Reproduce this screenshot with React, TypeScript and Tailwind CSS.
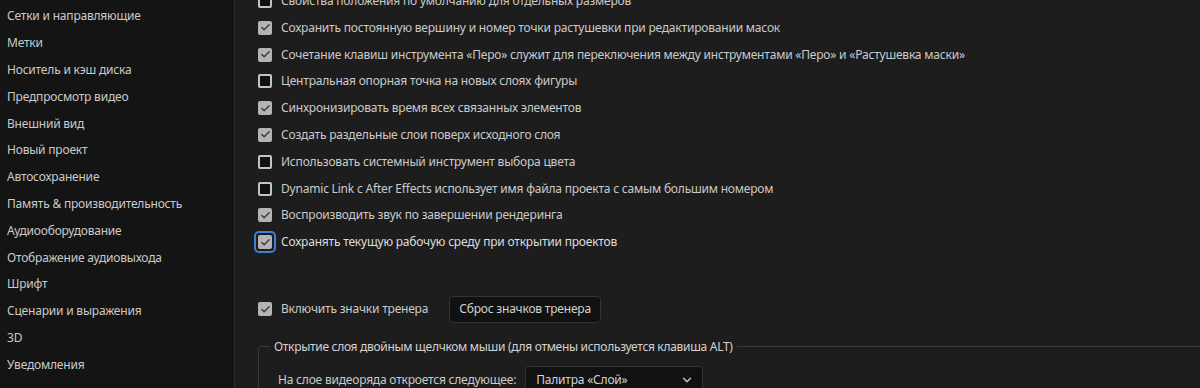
import { Check, ChevronDown } from "lucide-react";

const sidebarItems = [
  "Сетки и направляющие",
  "Метки",
  "Носитель и кэш диска",
  "Предпросмотр видео",
  "Внешний вид",
  "Новый проект",
  "Автосохранение",
  "Память & производительность",
  "Аудиооборудование",
  "Отображение аудиовыхода",
  "Шрифт",
  "Сценарии и выражения",
  "3D",
  "Уведомления",
];

const options: { label: string; checked: boolean; focused?: boolean }[] = [
  { label: "Свойства положения по умолчанию для отдельных размеров", checked: false },
  { label: "Сохранить постоянную вершину и номер точки растушевки при редактировании масок", checked: true },
  {
    label: "Сочетание клавиш инструмента «Перо» служит для переключения между инструментами «Перо» и «Растушевка маски»",
    checked: true,
  },
  { label: "Центральная опорная точка на новых слоях фигуры", checked: false },
  { label: "Синхронизировать время всех связанных элементов", checked: true },
  { label: "Создать раздельные слои поверх исходного слоя", checked: true },
  { label: "Использовать системный инструмент выбора цвета", checked: false },
  { label: "Dynamic Link с After Effects использует имя файла проекта с самым большим номером", checked: false },
  { label: "Воспроизводить звук по завершении рендеринга", checked: true },
  { label: "Сохранять текущую рабочую среду при открытии проектов", checked: true, focused: true },
];

function Checkbox({ checked, focused }: { checked: boolean; focused?: boolean }) {
  const box = checked ? (
    <span className="flex h-[14px] w-[14px] items-center justify-center rounded-[2px] bg-[#b4b4b4]">
      <Check className="h-[11px] w-[11px] text-[#3a3a3a]" strokeWidth={3} />
    </span>
  ) : (
    <span className="h-[14px] w-[14px] rounded-[2px] border-2 border-[#c4c4c4] bg-[#111]" />
  );
  if (focused) {
    return (
      <span className="-m-[4px] flex rounded-[5px] border-2 border-[#3b82d6] p-[2px]">
        {box}
      </span>
    );
  }
  return box;
}

export default function App() {
  return (
    <div
      className="flex h-[388px] w-[1200px] overflow-hidden bg-[#1d1d1d] text-[12px] tracking-[-0.2px] text-[#cacaca]"
      style={{ fontFamily: '"Noto Sans", "Open Sans", sans-serif' }}
    >
      <aside className="w-[235px] shrink-0 border-r border-[#2c2c2c] bg-[#141414] pt-[3px]">
        {sidebarItems.map((item) => (
          <div key={item} className="flex h-[26.8px] items-center pl-[7px] whitespace-nowrap">
            {item}
          </div>
        ))}
      </aside>

      <main className="min-w-0 flex-1 pl-[23px]">
        <div className="-mt-[12.4px]">
          {options.map((opt) => (
            <div key={opt.label} className="flex h-[26.8px] items-center gap-[9px] whitespace-nowrap">
              <Checkbox checked={opt.checked} focused={opt.focused} />
              <span className={opt.focused ? "text-[#dedede]" : ""}>{opt.label}</span>
            </div>
          ))}
        </div>

        <div className="mt-[40px] flex h-[27px] items-center whitespace-nowrap">
          <Checkbox checked />
          <span className="ml-[9px]">Включить значки тренера</span>
          <button className="ml-[21px] h-[27px] rounded-[4px] border border-[#333] bg-[#111] px-[9px] text-[#d2d2d2]">
            Сброс значков тренера
          </button>
        </div>

        <fieldset className="mt-[15px] w-[1100px] rounded-tl-[3px] border border-[#3a3a3a] pl-[19px] pt-[10px] pb-[20px]">
          <legend className="-ml-[8px] px-[4px] whitespace-nowrap tracking-[-0.3px] text-[#d2d2d2]">
            Открытие слоя двойным щелчком мыши (для отмены используется клавиша ALT)
          </legend>
          <div className="flex items-center whitespace-nowrap">
            <span>На слое видеоряда откроется следующее:</span>
            <div className="ml-[9px] flex h-[28px] w-[178px] items-center justify-between rounded-[4px] border border-[#333] bg-[#111] pl-[10px] pr-[8px] text-[#d2d2d2]">
              <span>Палитра «Слой»</span>
              <ChevronDown className="h-[14px] w-[14px] text-[#c4c4c4]" strokeWidth={2.5} />
            </div>
          </div>
        </fieldset>
      </main>
    </div>
  );
}
